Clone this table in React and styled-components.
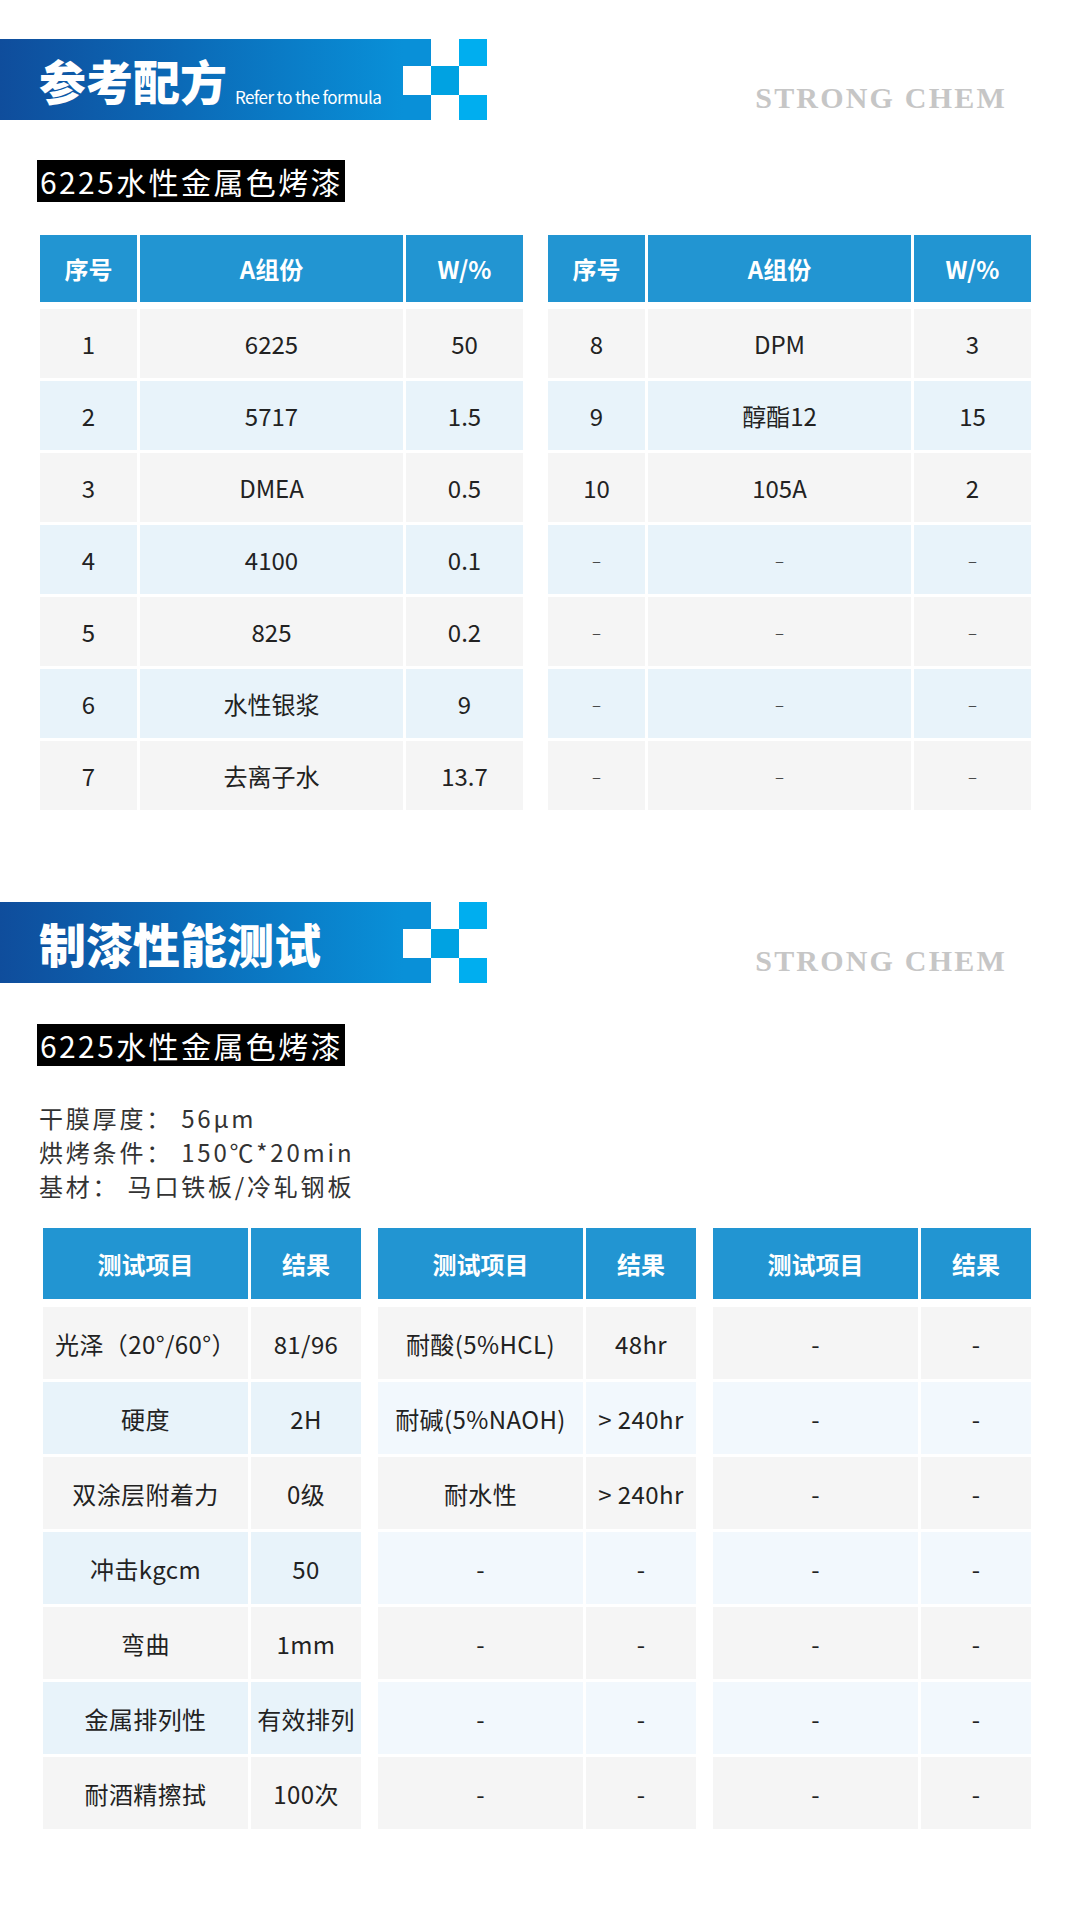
import React from 'react';
import styled, { createGlobalStyle } from 'styled-components';

const GlobalStyle = createGlobalStyle`
  html, body {
    margin: 0;
    padding: 0;
    background: #ffffff;
  }
  body {
    font-family: "Noto Sans CJK SC", "Noto Sans", sans-serif;
    color: #222222;
  }
`;

const Page = styled.div`
  width: 1080px;
  padding: 39px 0 60px;
  box-sizing: border-box;
  background: #ffffff;
`;

/* ---------- section banner ---------- */

const SectionHeader = styled.div`
  display: flex;
  align-items: stretch;
  height: 81px;
  margin-top: ${({ $top }) => $top || 0}px;
`;

const GradientBar = styled.div`
  width: 403px;
  padding-left: 39px;
  box-sizing: border-box;
  display: flex;
  align-items: center;
  gap: 8px;
  background: linear-gradient(90deg, #0f4d9c 0%, #0b6ab7 45%, #0990d8 100%);
`;

const Title = styled.h2`
  margin: 0;
  font-size: 47px;
  line-height: 1;
  font-weight: 900;
  color: #ffffff;
  white-space: nowrap;
`;

const TitleEn = styled.span`
  align-self: flex-end;
  margin-bottom: 15px;
  font-size: 17px;
  line-height: 1;
  color: #ffffff;
  letter-spacing: -0.6px;
  white-space: nowrap;
`;

const Checker = styled.div`
  display: grid;
  grid-template-columns: repeat(3, 28px);
  grid-template-rows: 27px 29px 25px;
`;

const Square = styled.div`
  background: ${({ $c }) => $c};
`;

const Brand = styled.div`
  align-self: flex-end;
  margin: 0 73px 7px auto;
  font-family: "Liberation Serif", "DejaVu Serif", serif;
  font-weight: 700;
  font-size: 30px;
  line-height: 30px;
  letter-spacing: 2.2px;
  color: #c6c6c6;
`;

const checkerColors = [
  '#0990d8', '#ffffff', '#00aeef',
  '#ffffff', '#00a2e2', '#ffffff',
  '#0990d8', '#ffffff', '#00aeef',
];

function Banner({ title, en, top }) {
  return (
    <SectionHeader $top={top}>
      <GradientBar>
        <Title>{title}</Title>
        {en && <TitleEn>{en}</TitleEn>}
      </GradientBar>
      <Checker>
        {checkerColors.map((c, i) => (
          <Square key={i} $c={c} />
        ))}
      </Checker>
      <Brand>STRONG CHEM</Brand>
    </SectionHeader>
  );
}

/* ---------- subtitle ---------- */

const Subtitle = styled.div`
  display: inline-block;
  margin: ${({ $top }) => $top}px 0 0 37px;
  height: 42px;
  padding: 0 2px 0 3px;
  background: #000000;
  color: #ffffff;
  font-size: 30px;
  line-height: 42px;
  letter-spacing: 2.4px;
  white-space: nowrap;
`;

/* ---------- tables ---------- */

const TablesRow = styled.div`
  display: flex;
  gap: ${({ $gap }) => $gap}px;
  padding-left: ${({ $left }) => $left}px;
  margin-top: ${({ $top }) => $top}px;
`;

const Table = styled.div`
  display: flex;
  flex-direction: column;
  gap: 3px;
`;

const Row = styled.div`
  display: grid;
  grid-template-columns: ${({ $cols }) => $cols};
  column-gap: 3px;
  height: ${({ $h }) => $h}px;
  margin-bottom: ${({ $after }) => $after || 0}px;
`;

const HeadCell = styled.div`
  display: flex;
  align-items: center;
  justify-content: center;
  background: #2295d2;
  color: #ffffff;
  font-weight: 700;
  font-size: 24px;
`;

const Cell = styled.div`
  display: flex;
  align-items: center;
  justify-content: center;
  background: ${({ $bg }) => $bg};
  color: #222222;
  font-size: ${({ $small }) => ($small ? 17 : 24)}px;
  font-weight: ${({ $small }) => ($small ? 300 : 400)};
  letter-spacing: ${({ $wide }) => ($wide ? 0.4 : 0)}px;
  white-space: nowrap;
`;

const InfoBlock = styled.div`
  margin: 35px 0 0 39px;
  font-size: 24px;
  line-height: 34px;
  letter-spacing: 2.8px;
  color: #333333;
`;

const InfoLine = styled.div`
  white-space: pre;
`;

const ODD = '#f5f5f5';
const EVEN = '#e8f3fa';
const PALE = '#f2f8fd';

const formulaLeft = [
  ['1', '6225', '50'],
  ['2', '5717', '1.5'],
  ['3', 'DMEA', '0.5'],
  ['4', '4100', '0.1'],
  ['5', '825', '0.2'],
  ['6', '水性银浆', '9'],
  ['7', '去离子水', '13.7'],
];

const formulaRight = [
  ['8', 'DPM', '3'],
  ['9', '醇酯12', '15'],
  ['10', '105A', '2'],
  ['–', '–', '–'],
  ['–', '–', '–'],
  ['–', '–', '–'],
  ['–', '–', '–'],
];

const testA = [
  ['光泽（20°/60°）', '81/96'],
  ['硬度', '2H'],
  ['双涂层附着力', '0级'],
  ['冲击kgcm', '50'],
  ['弯曲', '1mm'],
  ['金属排列性', '有效排列'],
  ['耐酒精擦拭', '100次'],
];

const testB = [
  ['耐酸(5%HCL)', '48hr'],
  ['耐碱(5%NAOH)', '> 240hr'],
  ['耐水性', '> 240hr'],
  ['-', '-'],
  ['-', '-'],
  ['-', '-'],
  ['-', '-'],
];

const testC = Array.from({ length: 7 }, () => ['-', '-']);

function DataTable({ head, rows, cols, headH, headGap, rowH, pale, wide }) {
  return (
    <Table>
      <Row $cols={cols} $h={headH} $after={headGap - 3}>
        {head.map((h, i) => (
          <HeadCell key={i}>{h}</HeadCell>
        ))}
      </Row>
      {rows.map((r, ri) => {
        const bg = ri % 2 === 0 ? ODD : pale ? PALE : EVEN;
        return (
          <Row key={ri} $cols={cols} $h={rowH}>
            {r.map((v, ci) => (
              <Cell key={ci} $bg={bg} $small={v === '–'} $wide={wide}>
                {v}
              </Cell>
            ))}
          </Row>
        );
      })}
    </Table>
  );
}

export default function App() {
  const fCols = '97px 263px 117px';
  const tCols = '205px 110px';
  return (
    <>
      <GlobalStyle />
      <Page>
        <Banner title="参考配方" en="Refer to the formula" />
        <Subtitle $top={40}>6225水性金属色烤漆</Subtitle>
        <TablesRow $gap={25} $left={40} $top={33}>
          <DataTable head={['序号', 'A组份', 'W/%']} rows={formulaLeft} cols={fCols} headH={67} headGap={7} rowH={69} />
          <DataTable head={['序号', 'A组份', 'W/%']} rows={formulaRight} cols={fCols} headH={67} headGap={7} rowH={69} />
        </TablesRow>

        <Banner title="制漆性能测试" top={92} />
        <Subtitle $top={41}>6225水性金属色烤漆</Subtitle>
        <InfoBlock>
          <InfoLine>干膜厚度： 56μm</InfoLine>
          <InfoLine>烘烤条件： 150℃*20min</InfoLine>
          <InfoLine>基材： 马口铁板/冷轧钢板</InfoLine>
        </InfoBlock>
        <TablesRow $gap={17} $left={43} $top={25}>
          <DataTable head={['测试项目', '结果']} rows={testA} cols={tCols} headH={71} headGap={8} rowH={72} wide />
          <DataTable head={['测试项目', '结果']} rows={testB} cols={tCols} headH={71} headGap={8} rowH={72} pale wide />
          <DataTable head={['测试项目', '结果']} rows={testC} cols={tCols} headH={71} headGap={8} rowH={72} pale wide />
        </TablesRow>
      </Page>
    </>
  );
}
